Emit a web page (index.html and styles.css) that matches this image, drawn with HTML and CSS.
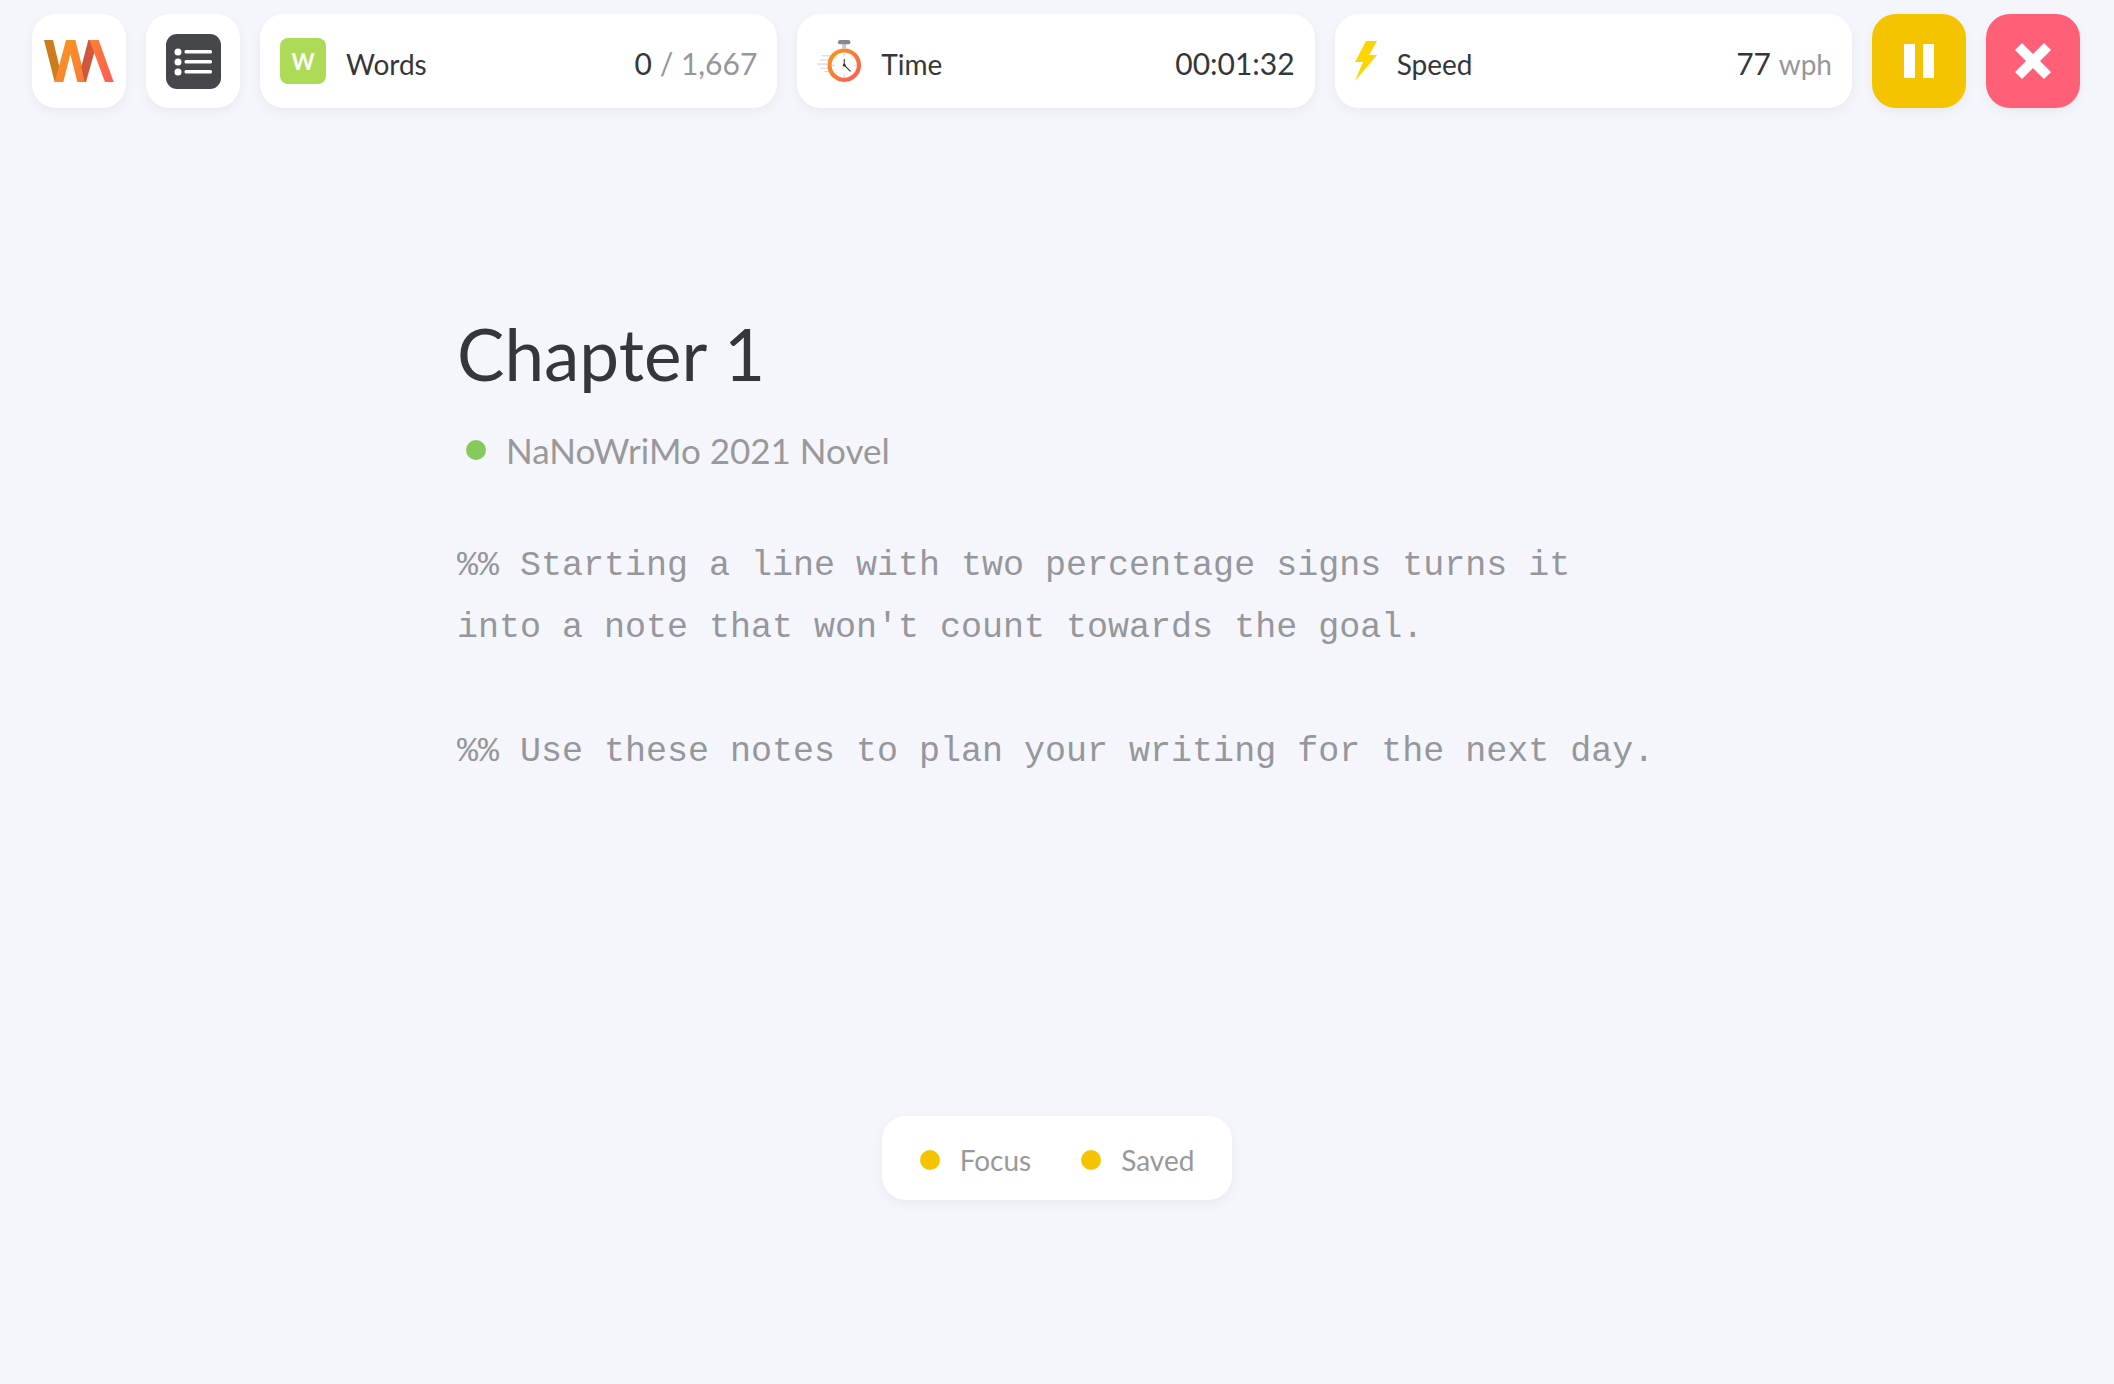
FILE: index.html
```html
<!DOCTYPE html>
<html lang="en">
<head>
    <meta charset="UTF-8">
    <meta name="viewport" content="width=device-width, initial-scale=1.0">
    <title>Chapter 1</title>
    <link rel="stylesheet" href="styles.css">
</head>
<body>
    <header class="toolbar">
        <a class="tile" href="#" aria-label="Home">
            <svg class="logo" viewBox="72 120 210 126">
                <defs>
                    <linearGradient id="logoW" x1="0" y1="0" x2="1" y2="1">
                        <stop offset="0" stop-color="#f6981d"/>
                        <stop offset="1" stop-color="#fc7a3c"/>
                    </linearGradient>
                    <linearGradient id="logoA" x1="0" y1="0" x2="1" y2="1">
                        <stop offset="0" stop-color="#fd8034"/>
                        <stop offset="1" stop-color="#ff5a57"/>
                    </linearGradient>
                </defs>
                <polygon fill="#cb7c1c" points="72,120 99,120 120,208 108,246 104,246"/>
                <polygon fill="url(#logoW)" points="104,246 138,120 166,120 198,246 172,246 151,162 130,246"/>
                <polygon fill="#d0573a" points="205,120 216,120 224,154 198,246 194,246 184,200"/>
                <polygon fill="url(#logoA)" points="208,120 236,120 281,246 255,246"/>
            </svg>
        </a>
        <button class="tile" type="button" aria-label="Menu">
            <svg class="menu-icon" viewBox="0 0 110 110">
                <rect width="110" height="110" rx="22" fill="#454649"/>
                <g fill="#fff">
                    <circle cx="24" cy="36" r="7"/>
                    <circle cx="24" cy="56" r="7"/>
                    <circle cx="24" cy="76" r="7"/>
                    <rect x="37" y="32" width="55" height="7" rx="3"/>
                    <rect x="37" y="52" width="55" height="7" rx="3"/>
                    <rect x="37" y="72" width="55" height="7" rx="3"/>
                </g>
            </svg>
        </button>

        <div class="stat">
            <span class="words-badge">W</span>
            <span class="stat-label">Words</span>
            <span class="stat-value">0 <span class="muted">/ 1,667</span></span>
        </div>
        <div class="stat">
            <svg class="time-icon" viewBox="0 0 42 42">
                <defs>
                    <linearGradient id="ring" x1="0" y1="0" x2="1" y2="1">
                        <stop offset="0" stop-color="#f6981d"/>
                        <stop offset="1" stop-color="#ff5a57"/>
                    </linearGradient>
                </defs>
                <path d="M4 16h10M0 24h10M3 20h8M3 28h8M7 31h8" stroke="#cfd8e0" stroke-width="1"/>
                <rect x="24" y="3" width="4" height="6" fill="#c5ced6"/>
                <rect x="20" y="1" width="12" height="4" rx="2" fill="#87888c"/>
                <circle cx="26" cy="25" r="14" fill="#fff" stroke="url(#ring)" stroke-width="4"/>
                <path d="M26 13v3M26 34v3M14 25h3M35 25h3M18 17l1 1M34 17l-1 1M18 33l1-1" stroke="#c5ced6" stroke-width="1"/>
                <path d="M26 19v6l6 6" fill="none" stroke="#333" stroke-width="1"/>
                <circle cx="26" cy="25" r="1.3" fill="#333"/>
            </svg>
            <span class="stat-label">Time</span>
            <span class="stat-value">00:01:32</span>
        </div>
        <div class="stat">
            <svg class="speed-icon" viewBox="0 0 22 40">
                <polygon fill="#ffd500" points="11,0 22,0 14,14 22,14 0,40 8,21 0,21"/>
            </svg>
            <span class="stat-label">Speed</span>
            <span class="stat-value">77 <span class="muted unit">wph</span></span>
        </div>

        <button class="tile pause" type="button" aria-label="Pause">
            <svg class="pause-icon" viewBox="0 0 30 34">
                <path d="M0 0h11v34H0zM19 0h11v34H19z" fill="#fff"/>
            </svg>
        </button>
        <button class="tile close" type="button" aria-label="Close">
            <svg class="close-icon" viewBox="0 0 36 36">
                <path d="M7 0L18 11L29 0L36 7L25 18L36 29L29 36L18 25L7 36L0 29L11 18L0 7z" fill="#fff"/>
            </svg>
        </button>
    </header>

    <main class="editor">
        <h1>Chapter 1</h1>
        <p class="project"><span class="dot green"></span>NaNoWriMo 2021 Novel</p>
        <textarea class="text" rows="6" aria-label="Chapter text" spellcheck="false">%% Starting a line with two percentage signs turns it into a note that won't count towards the goal.

%% Use these notes to plan your writing for the next day.</textarea>
    </main>

    <footer class="status">
        <button type="button"><span class="dot"></span>Focus</button>
        <button type="button"><span class="dot"></span>Saved</button>
    </footer>
</body>
</html>
```
FILE: styles.css
```css
* {
    box-sizing: border-box;
}

body {
    margin: 0;
    min-height: 100vh;
    display: flex;
    flex-direction: column;
    background-color: #f4f6fb;
    color: #35363a;
    font-family: Lato, sans-serif;
}

button {
    border: none;
    padding: 0;
    font: inherit;
    color: inherit;
    background: none;
    cursor: pointer;
}

.toolbar {
    display: flex;
    gap: 20px;
    padding: 14px 34px 0 32px;
}

.tile, .stat, .status {
    background-color: #fff;
    border-radius: 24px;
    box-shadow: 0 4px 12px rgba(0, 0, 0, 0.05);
}

.tile {
    flex: none;
    width: 94px;
    height: 94px;
    display: flex;
    justify-content: center;
    align-items: center;
}

.stat {
    flex: 1;
    display: flex;
    align-items: center;
    height: 94px;
    padding: 0 20px;
}

.stat-label {
    margin-left: 20px;
    padding-top: 6px;
    font-size: 28px;
}

.stat-value {
    margin-left: auto;
    padding-top: 4px;
    font-size: 30px;
}

.muted {
    color: #96979b;
}

.unit {
    font-size: 28px;
}

.words-badge {
    width: 46px;
    height: 46px;
    border-radius: 8px;
    background-color: #aedb57;
    color: #fff;
    font-size: 22px;
    font-weight: 700;
    line-height: 48px;
    text-align: center;
}

.logo {
    width: 70px;
    height: 42px;
}

.menu-icon {
    width: 55px;
    height: 55px;
}

.time-icon {
    width: 44px;
    height: 44px;
}

.speed-icon {
    width: 22px;
    height: 40px;
}

.pause {
    background-color: #f5c400;
}

.pause-icon {
    width: 30px;
    height: 34px;
}

.close {
    background-color: #ff6077;
}

.close-icon {
    width: 36px;
    height: 36px;
}

.editor {
    flex: 1;
    width: 100%;
    max-width: 1200px;
    margin: 0 auto;
    padding-top: 204px;
}

h1 {
    margin: 0;
    font-size: 71px;
    font-weight: 400;
    line-height: 84px;
}

.project {
    display: flex;
    align-items: center;
    gap: 20px;
    margin: 30px 0 0;
    padding-left: 9px;
    color: #999;
    font-size: 35px;
    line-height: 48px;
}

.text {
    display: block;
    width: 100%;
    margin-top: 61px;
    padding: 0;
    border: none;
    outline: none;
    resize: none;
    overflow: hidden;
    background: none;
    color: #96979b;
    font-family: "Liberation Mono", monospace;
    font-size: 35px;
    line-height: 62px;
}

.dot {
    width: 20px;
    height: 20px;
    border-radius: 50%;
    background-color: #f5c400;
}

.green {
    background-color: #86c95d;
}

.status {
    align-self: center;
    display: flex;
    gap: 50px;
    margin-bottom: 184px;
    padding: 4px 38px 0;
}

.status button {
    display: flex;
    align-items: center;
    gap: 20px;
    height: 80px;
    color: #999;
    font-size: 28px;
}
```
